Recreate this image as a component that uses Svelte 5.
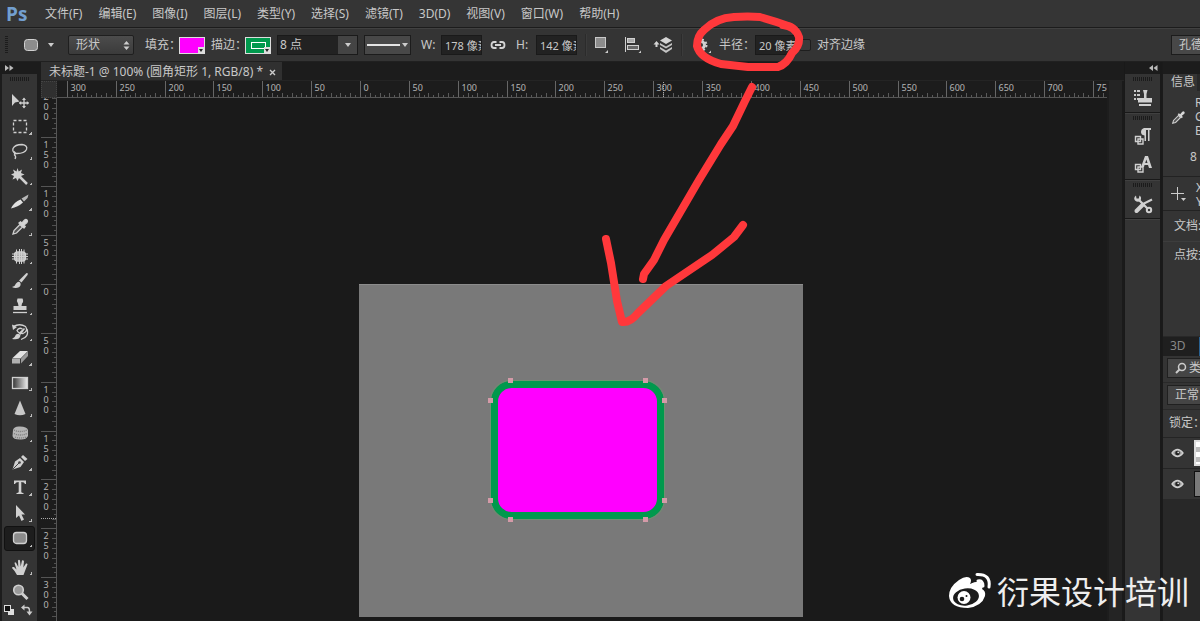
<script>
  const menus = ['文件(F)', '编辑(E)', '图像(I)', '图层(L)', '类型(Y)', '选择(S)', '滤镜(T)', '3D(D)', '视图(V)', '窗口(W)', '帮助(H)'];

  const toolGroups = [
    ['move', 'marquee', 'lasso', 'wand', 'slice', 'eyedropper'],
    ['heal', 'brush', 'stamp', 'history', 'eraser', 'gradient', 'sharpen', 'sponge'],
    ['pen', 'type', 'select', 'shape'],
    ['hand', 'zoom']
  ];

  const toolNames = {
    move: '移动工具', marquee: '矩形选框工具', lasso: '套索工具', wand: '魔棒工具', slice: '切片工具',
    eyedropper: '吸管工具', heal: '修补工具', brush: '画笔工具', stamp: '仿制图章工具', history: '历史记录画笔',
    eraser: '橡皮擦工具', gradient: '渐变工具', sharpen: '锐化工具', sponge: '海绵工具', pen: '钢笔工具',
    type: '文字工具', select: '路径选择工具', shape: '圆角矩形工具', hand: '抓手工具', zoom: '缩放工具'
  };

  let active = $state('shape');
  let strokeWidth = $state('8 点');
  let shapeWidth = $state('178 像素');
  let shapeHeight = $state('142 像素');
  let radius = $state('20 像素');
  let snap = $state(false);

  // 50 document units take 48.87 screen pixels at this zoom level.
  const step = 48.87;
  const originX = 303;
  const originY = 186;

  function ruler(origin, from, to) {
    const ticks = [];
    for (let i = from * 10; i <= to * 10; i++) {
      const pos = Math.round(origin + (i * step) / 10) + 0.5;
      const major = i % 10 === 0;
      ticks.push({ pos, size: major ? 17 : i % 2 === 0 ? 5 : 3, label: major ? String(Math.abs(i * 5)) : '' });
    }
    return ticks;
  }

  const horizontal = ruler(originX, -6, 16);
  const vertical = ruler(originY, -4, 7);
</script>

{#snippet eye()}
  <svg width="13" height="10" viewBox="0 0 13 10"><path d="M1 5Q6.500 -2 12 5Q6.500 12 1 5Z" fill="#999" stroke="#d0d0d0" stroke-width="1.300" /><circle cx="6.500" cy="5" r="2.300" fill="#222" /><circle cx="7.200" cy="4.300" r=".9" fill="#ddd" /></svg>
{/snippet}

{#snippet dropper(size)}
  <svg width={size} height={size} viewBox="0 0 18 18"><path d="M2 16L3 12.500L9 6.500L11.500 9L5.500 15Z" fill="#555" stroke="#d0d0d0" stroke-width="1.300" /><path d="M8 5L9.500 3.800L11 5L13.500 2Q15 1 16 2Q17 3 16 4.500L13 7L14.200 8.500L13 10Z" fill="#d6d6d6" /></svg>
{/snippet}

{#snippet toolIcon(name)}
  <svg width="18" height="18" viewBox="0 0 18 18" fill="none" stroke="#d0d0d0" stroke-width="1.300">
    {#if name === 'move'}
      <path d="M1 2V14L4 10.500L8.500 9.500Z" fill="#d0d0d0" stroke="none" />
      <path d="M13 6.500V15.500M8.500 11H17.500" />
      <path d="M13 5.500L15 8H11ZM13 16.500L15 14H11ZM7.800 11L10.200 9V13ZM18 11L15.800 9V13Z" fill="#d0d0d0" stroke="none" />
    {:else if name === 'marquee'}
      <rect x="2.500" y="3.500" width="13" height="12" stroke-dasharray="3 2" />
    {:else if name === 'lasso'}
      <path d="M5 12Q1 10 2 6.500Q4 2.500 11 2.500Q17 3.500 15.500 7.500Q13.500 11.500 6 11.500Q3 11 3.500 13Q5.500 14.500 4 17" />
      <path d="M5 12L3 9.500" />
    {:else if name === 'wand'}
      <path d="M7 7L16 16" stroke-width="2.500" />
      <path d="M6.500 0L7.700 3.500L11 1.500L10 5L13.500 6.500L10 8L11.500 11.500L8 10L6.500 13L5 10L1.500 11.500L3 8L0 6.500L3.300 5L2 1.500L5.500 3.500Z" fill="#d0d0d0" stroke="none" />
    {:else if name === 'slice'}
      <path d="M0 15.500Q3 9 9.500 6.500L12 9.500Q7 14 0 15.500Z" fill="#e0e0e0" stroke="none" />
      <path d="M10.500 5.500L17.500 1.500L16.500 5L13 8.500Z" fill="#b8b8b8" stroke="none" />
    {:else if name === 'eyedropper'}
      {@render dropper(18)}
    {:else if name === 'heal'}
      <rect x="3.500" y="5" width="11" height="9" rx="3" fill="#aaa" />
      <path d="M5.500 2.500V16.500M8.500 2V17M10.500 2V17M13 2.500V16.500M1 7H17M1 9.500H17M1 12H17" stroke-width="1" />
    {:else if name === 'brush'}
      <path d="M8 8.500L15.500 1L17 1.500L16.500 3L10.500 10.500Z" fill="#d0d0d0" stroke="none" />
      <path d="M1 15Q4 14.500 5 11.500Q7.500 8.500 9.500 11Q10.500 15.500 5 16Q3 16.200 1 15Z" fill="#d0d0d0" stroke="none" />
    {:else if name === 'stamp'}
      <path d="M6.500 1.500H11.500Q13 4.500 11 6.500L10.500 9H15.500V13H2.500V9H7.500L7 6.500Q5 4 6.500 1.500Z" fill="#d0d0d0" stroke="none" />
      <path d="M2 15.500H16" />
    {:else if name === 'history'}
      <path d="M2 3.500Q9 0 14.500 3.500Q17.500 8 12 10.500Q7.500 10.500 6 7.500Q8 4 11.500 6M16 6Q18.500 14 10 16.500" />
      <path d="M7.500 10L13 5L14 6L9.500 12Z" fill="#d0d0d0" stroke="none" />
      <path d="M1 16Q4 14.500 5 11.500Q8 9.500 9.500 12.500Q8.500 17.500 1 16Z" fill="#d0d0d0" stroke="none" />
      <path d="M1 1.500L2 7L6 4Z" fill="#d0d0d0" stroke="none" />
    {:else if name === 'eraser'}
      <path d="M1 10.500L9 3H17L9.500 10.500Z" fill="#e2e2e2" stroke="none" />
      <path d="M1 11H9V15.500H1Z" fill="#b0b0b0" stroke="none" />
      <path d="M10 10.500L17 3.500V8L10 15.500Z" fill="#999" stroke="none" />
    {:else if name === 'gradient'}
      <defs><linearGradient id="ramp"><stop offset="0" stop-color="#333" /><stop offset="1" stop-color="#eee" /></linearGradient></defs>
      <rect x="1.500" y="3.500" width="15" height="11" fill="url(#ramp)" />
    {:else if name === 'sharpen'}
      <path d="M9 1.500L14.500 15Q9 17.500 3.500 15Z" fill="#c8c8c8" stroke="none" />
    {:else if name === 'sponge'}
      <path d="M2 6Q3 2 9 2.500Q16 2.500 17 6V12Q15 16 9 15.500Q2 15.500 1.500 12Z" fill="#b5b5b5" stroke="none" />
      <path d="M3 6Q9 9 16 6M3 9.500Q9 12.500 16 9.500M4 13Q9 15 15 13" stroke="#777" stroke-dasharray="1 1" />
    {:else if name === 'pen'}
      <path d="M1.500 16.500L4 8.500L9 5L13 9L9.500 14Z" fill="#d0d0d0" stroke="none" />
      <path d="M10 4L12 2L16.500 6L14 8Z" fill="#d0d0d0" stroke="none" />
      <path d="M2 16L8 10" stroke="#444" stroke-width="1" /><circle cx="8.500" cy="9.500" r="1.300" fill="#444" stroke="none" />
    {:else if name === 'type'}
      <path d="M3 2.500H15V6H14Q13.500 4 10.300 4V14Q10.500 15 12.500 15V16H5.500V15Q7.500 15 7.700 14V4Q4.500 4 4 6H3Z" fill="#d0d0d0" stroke="none" />
    {:else if name === 'select'}
      <path d="M5 1V14L8 11.500L10.500 17L13 15.500L10.500 10.500H14Z" fill="#d0d0d0" stroke="none" />
    {:else if name === 'shape'}
      <rect x="2.500" y="3.500" width="13" height="11" rx="3" fill="#8c8c8c" />
    {:else if name === 'hand'}
      <path d="M6 17Q4 13 1 10Q1 8.500 3 9L5.500 11.500L3.500 5Q4 3.500 5.200 5L7.300 9L7 2.500Q8 1 9 2.500L9.700 8.500L11 2.500Q12.500 1.500 13 3.500L12.300 9.500L15 5.500Q16.500 5 16.500 6.500L14 13L12.500 17Z" fill="#d0d0d0" stroke="none" />
    {:else if name === 'zoom'}
      <circle cx="7.500" cy="7" r="4.800" fill="#999" stroke-width="1.600" /><path d="M11 10.500L16.500 16" stroke-width="3" />
    {/if}
  </svg>
{/snippet}

<div class="app">
  <nav class="menubar" aria-label="主菜单">
    <span class="logo">Ps</span>
    <div class="menus">
      {#each menus as item}<button>{item}</button>{/each}
    </div>
  </nav>

  <div class="options">
    <i class="grip-v"></i>
    <button class="preset" aria-label="工具预设">
      <svg width="16" height="14" viewBox="0 0 16 14"><rect x="1.500" y="1.500" width="13" height="11" rx="3" fill="#8c8c8c" stroke="#d0d0d0" /></svg>
      <i class="caret"></i>
    </button>
    <div class="mode">
      <select aria-label="工具模式"><option>形状</option><option>路径</option><option>像素</option></select>
      <svg width="7" height="11" viewBox="0 0 7 11"><path d="M3.500 1L6.500 4.500H.5ZM3.500 10L6.500 6.500H.5Z" fill="#ccc" /></svg>
    </div>
    <div class="pair">
      <span>填充：</span>
      <button class="swatch fill" aria-label="填充颜色"><i class="corner"></i></button>
    </div>
    <div class="pair">
      <span>描边：</span>
      <button class="swatch line" aria-label="描边颜色"><i class="ring"></i><i class="corner"></i></button>
    </div>
    <div class="stroke">
      <input aria-label="描边宽度" bind:value={strokeWidth} />
      <button aria-label="描边宽度选项"><i class="caret"></i></button>
    </div>
    <button class="linetype" aria-label="描边类型"><i class="sample"></i><i class="caret"></i></button>
    <label class="size">W:<input bind:value={shapeWidth} /></label>
    <button class="plain link" aria-label="链接宽高">
      <svg width="16" height="10" viewBox="0 0 16 10" fill="none" stroke="#d4d4d4" stroke-width="1.800"><path d="M6.500 2H4Q1.500 2 1.500 5Q1.500 8 4 8H6.500M9.500 2H12Q14.500 2 14.500 5Q14.500 8 12 8H9.500M5 5H11" /></svg>
    </button>
    <label class="size">H:<input bind:value={shapeHeight} /></label>
    <i class="divider"></i>
    <div class="arrange">
      <button class="plain" aria-label="路径操作">
        <svg width="18" height="18" viewBox="0 0 18 18"><rect x="2.500" y="1.500" width="10" height="10" fill="#8c8c8c" stroke="#c8c8c8" /><path d="M15 14V17H12Z" fill="#ccc" /></svg>
      </button>
      <button class="plain" aria-label="路径对齐方式">
        <svg width="18" height="18" viewBox="0 0 18 18"><path d="M2.500 1V16" stroke="#d0d0d0" /><rect x="4.500" y="2.500" width="7" height="4" fill="#aaa" stroke="#d0d0d0" /><rect x="4.500" y="9.500" width="11" height="4" fill="#666" stroke="#d0d0d0" /><path d="M18 14.500V17H15.500Z" fill="#ccc" /></svg>
      </button>
      <button class="plain" aria-label="路径排列方式">
        <svg width="20" height="18" viewBox="0 0 20 18"><path d="M13 1L19 4.500L13 8L7 4.500Z" fill="#d4d4d4" /><path d="M7 7L13 10.500L19 7V9L13 12.500L7 9ZM7 11L13 14.500L19 11V13L13 17L7 13Z" fill="#c4c4c4" /><path d="M3.500 5L6.500 8.500H4.500V11H2.500V8.500H.5Z" fill="#d4d4d4" /></svg>
      </button>
    </div>
    <i class="divider"></i>
    <button class="plain gear" aria-label="几何选项">
      <svg width="18" height="18" viewBox="0 0 18 18"><circle cx="8" cy="9" r="3.500" fill="none" stroke="#d0d0d0" stroke-width="3" /><circle cx="8" cy="9" r="5.500" fill="none" stroke="#d0d0d0" stroke-width="2" stroke-dasharray="2.200 2.120" /><path d="M18 14.500V17H15.500Z" fill="#ccc" /></svg>
    </button>
    <label class="radius">半径：<input bind:value={radius} /></label>
    <label class="snap"><input type="checkbox" bind:checked={snap} />对齐边缘</label>
    <button class="workspace">孔德川</button>
  </div>

  <div class="main">
    <aside class="toolbox" aria-label="工具">
      <div class="strip"><svg width="9" height="6" viewBox="0 0 9 6"><path d="M0 0L4 3L0 6ZM4.500 0L8.500 3L4.500 6Z" fill="#bbb" /></svg></div>
      <div class="tools">
        <i class="grip-h"></i>
        {#each toolGroups as group}
          <div class="group">
            {#each group as name}
              <button class:active={active === name} aria-label={toolNames[name]} onclick={() => (active = name)}>
                {@render toolIcon(name)}
                {#if name !== 'move' && name !== 'zoom'}<i class="more"></i>{/if}
              </button>
            {/each}
          </div>
        {/each}
        <div class="colors">
          <button aria-label="默认颜色"><svg width="12" height="12" viewBox="0 0 12 12"><rect x="5" y="5" width="6" height="6" fill="#ddd" /><rect x="1.500" y="1.500" width="6" height="6" fill="#111" stroke="#ddd" /></svg></button>
          <button aria-label="切换颜色"><svg width="12" height="12" viewBox="0 0 12 12"><path d="M3 3.500H6.500Q8.500 3.500 8.500 7V8" fill="none" stroke="#ccc" stroke-width="1.400" /><path d="M0 3.500L3.500 .5V6.500ZM8.500 11.500L5.500 7.500H11.500Z" fill="#ccc" /></svg></button>
        </div>
      </div>
    </aside>

    <section class="document">
      <div class="tabs">
        <div class="tab">
          <span>未标题-1 @ 100% (圆角矩形 1, RGB/8) *</span>
          <button aria-label="关闭"><svg width="7" height="7" viewBox="0 0 7 7"><path d="M1 1L6 6M6 1L1 6" stroke="#ccc" stroke-width="1.400" /></svg></button>
        </div>
      </div>
      <div class="view">
        <div class="origin"></div>
        <svg class="hruler" aria-hidden="true">
          {#each horizontal as t}
            <path d="M{t.pos} 17V{17 - t.size}" stroke={t.label ? '#666' : '#5a5a5a'} />
            {#if t.label}<text x={t.pos + 3} y="10">{t.label}</text>{/if}
          {/each}
          <path d="M606.500 1V17" stroke="#aaa" stroke-dasharray="1 1" />
        </svg>
        <svg class="vruler" aria-hidden="true">
          {#each vertical as t}
            <path d="M16 {t.pos}H{16 - t.size}" stroke={t.label ? '#555' : '#505050'} />
            {#each t.label.split('') as digit, i}<text x="5" y={t.pos + 10 + i * 10} text-anchor="middle">{digit}</text>{/each}
          {/each}
          <path d="M0 420.500H16" stroke="#aaa" stroke-dasharray="1 1" />
        </svg>
        <div class="canvas">
          <svg class="artboard" width="444" height="333" viewBox="0 0 444 333" role="img" aria-label="圆角矩形">
            <rect width="444" height="333" fill="#797979" />
            <path d="M0 .5H444" stroke="#8c8c8c" />
            <rect x="135.500" y="100.500" width="166" height="131" rx="17" fill="#f0f" stroke="#00994d" stroke-width="7" />
            <rect x="131.500" y="96.500" width="174" height="139" rx="20" fill="none" stroke="#6f9070" />
            {#each [[151, 96], [286, 96], [131, 116], [305, 116], [131, 216], [305, 216], [151, 235], [286, 235]] as [x, y]}
              <rect x={x - 2} y={y - 2} width="5" height="5" fill="#d49aa8" />
            {/each}
          </svg>
        </div>
        <div class="scrollbar"></div>
      </div>
    </section>

    <aside class="dock">
      <div class="strip end"><svg width="9" height="6" viewBox="0 0 9 6"><path d="M4 0L0 3L4 6ZM8.500 0L4.500 3L8.500 6Z" fill="#bbb" /></svg></div>
      <div class="cell">
        <i class="grip-h"></i>
        <button aria-label="仿制源"><svg width="22" height="20" viewBox="0 0 22 20"><path d="M2 3H8M2 7H8M2 11H7" stroke="#c8c8c8" stroke-width="2" stroke-dasharray="2 1 5" /><path d="M11 2H15.500L14.500 6V10H20V14.500H6V10H12V6ZM7 16H19V18H7Z" fill="#d0d0d0" /></svg></button>
      </div>
      <div class="cell">
        <i class="grip-h"></i>
        <button aria-label="段落样式"><svg width="20" height="20" viewBox="0 0 20 20"><path d="M18 3V1H11Q8 2 8 5Q8 8 11.500 8.500V14H13V3H15V14H16.500V3Z" fill="#d0d0d0" /><path d="M2.500 9.500H7.500V14.500H2.500ZM5 12H10V17H5Z" fill="none" stroke="#d0d0d0" stroke-width="1.400" /></svg></button>
        <button aria-label="字符样式"><svg width="20" height="20" viewBox="0 0 20 20"><path d="M8 12L12 1H15L19 13H16L15 10H11.500L11 12ZM12.200 8H14.500L13.400 4.500Z" fill="#d0d0d0" /><path d="M2.500 9.500H7.500V14.500H2.500ZM5 12H10V17H5Z" fill="none" stroke="#d0d0d0" stroke-width="1.400" /></svg></button>
      </div>
      <div class="cell">
        <i class="grip-h"></i>
        <button aria-label="工具预设"><svg width="20" height="20" viewBox="0 0 20 20" fill="none" stroke="#d0d0d0"><path d="M6 6L15 15" stroke-width="2.200" /><path d="M3 1.500Q0 4 2 6.500Q5 9 7.500 6.500Q9 3 6.500 1.500L5.800 4.500L3.500 4.500Z" fill="#d0d0d0" stroke="none" /><circle cx="16" cy="16" r="2.200" stroke-width="2" /><path d="M19 5.500L11 9.500" stroke-width="2" /><path d="M10 10.500L3.500 17" stroke-width="4" stroke-linecap="round" /></svg></button>
      </div>
    </aside>

    <aside class="panels">
      <div class="strip"></div>
      <div class="heading">信息</div>
      <div class="info">
        <div class="rgb">
          {@render dropper(15)}
          <p>R:<br />G:<br />B:</p>
        </div>
        <p class="bits">8 位</p>
      </div>
      <div class="coords">
        <svg width="16" height="16" viewBox="0 0 16 16"><path d="M6.500 0V13M0 6.500H13" stroke="#ccc" /><path d="M10 11H15L12.500 14Z" fill="#ccc" /></svg>
        <p>X:<br />Y:</p>
      </div>
      <div class="doc-size">文档:416.2K</div>
      <div class="hint">点按并拖动</div>
      <div class="ptabs"><span>3D</span><b></b></div>
      <div class="filter">
        <button><svg width="12" height="12" viewBox="0 0 12 12" fill="none" stroke="#ccc"><circle cx="7" cy="5" r="3.500" stroke-width="1.500" /><path d="M4.500 7.500L1 11" stroke-width="2" /></svg>类型</button>
      </div>
      <div class="filter"><button>正常</button></div>
      <div class="lock">锁定：</div>
      <div class="layer">{@render eye()}<i class="thumb checker"></i></div>
      <div class="layer">{@render eye()}<i class="thumb"></i></div>
    </aside>
  </div>

  <svg class="annotation" width="260" height="330" viewBox="0 0 260 330" fill="none" stroke="#ff383b" stroke-width="8" stroke-linecap="round" stroke-linejoin="round" aria-hidden="true">
    <path d="M201 27Q185 21 170 17Q158 16 144 17Q126 18 114 30Q107 36 107 46Q110 58 131 64L158 67H188Q197 64 202 53Q210 46 209 37Q205 26 193 25" />
    <path d="M162 87L155 101L143 126L131 144L109 180L74 240L64 260L54 274L53 279" />
    <path d="M16 239L21 263L27 301L32 322Q40 323 48 313L76 286L122 255L144 237L153 225" />
  </svg>

  <div class="watermark">
    <svg width="44" height="37" viewBox="0 0 44 37">
      <path d="M1 24Q1 15 11 8Q18 3 22 6Q24 8 22 12Q30 8 34 11Q36 13 34 17Q38 19 37 24Q34 34 20 36Q2 36 1 24Z" fill="#fff" />
      <ellipse cx="18" cy="25" rx="13" ry="8.500" transform="rotate(-8 18 25)" fill="#1b1b1b" />
      <circle cx="16" cy="25.500" r="6.500" fill="#fff" /><circle cx="14" cy="27" r="2.300" fill="#1b1b1b" /><circle cx="18.500" cy="24" r="1" fill="#1b1b1b" />
      <path d="M30 9Q35 8 35 14M29 2.500Q43 2 41 15" fill="none" stroke="#fff" stroke-width="3" stroke-linecap="round" />
    </svg>
    <span>衍果设计培训</span>
  </div>
</div>

<style>
  :global(body) { margin: 0; background: #1a1a1a; }
  .app {
    position: relative; display: flex; flex-direction: column; height: 100vh; overflow: hidden;
    font: 12px/16px "Noto Sans", "Noto Sans CJK SC", sans-serif; color: #c8c8c8; background: #1a1a1a;
  }
  .app *, .app *::before { box-sizing: border-box; }
  button, input, select { font: inherit; color: inherit; margin: 0; padding: 0; border: 0; border-radius: 0; background: none; outline: none; }
  button { display: flex; align-items: center; white-space: nowrap; }
  p { margin: 0; }
  svg { flex: none; display: block; }

  .menubar { display: flex; align-items: center; flex: none; height: 28px; background: #353535; border-bottom: 1px solid #1c1c1c; padding-left: 6px; }
  .logo { width: 39px; font: bold 19px/24px "Open Sans", sans-serif; color: #729fcf; }
  .menus { display: flex; gap: 16px; }

  .options { display: flex; align-items: center; flex: none; height: 34px; padding-left: 5px; background: #343434; border-top: 1px solid #414141; border-bottom: 1px solid #202020; overflow: hidden; white-space: nowrap; }
  .options > * { flex: none; }
  .grip-v { width: 3px; height: 18px; background: repeating-linear-gradient(#1c1c1c 0 1px, #343434 1px 2px); }
  .caret { flex: none; border: 3px solid transparent; border-top: 4px solid #ccc; border-bottom: 0; }
  .preset { margin-left: 15px; gap: 9px; }
  .mode { position: relative; margin-left: 14px; }
  .mode select { display: block; appearance: none; width: 66px; height: 20px; padding-left: 7px; border: 1px solid #1f1f1f; border-radius: 2px; background: linear-gradient(#4c4c4c, #3b3b3b); }
  .mode svg { position: absolute; right: 4px; top: 5px; pointer-events: none; }
  .pair { display: flex; align-items: center; width: 60px; margin-left: 11px; }
  .pair span { width: 34px; }
  .pair + .pair { margin-left: 6px; }
  .swatch { position: relative; flex: none; width: 26px; height: 17px; border: 1px solid #ddd; }
  .fill { background: #f0f; }
  .line { background: #00994d; }
  .ring { position: absolute; left: 5px; top: 4px; width: 15px; height: 7px; border: 1px solid #fff; }
  .corner { position: absolute; right: 0; bottom: 0; width: 6px; height: 6px; background: #ddd; }
  .corner::before { content: ""; position: absolute; left: 1px; top: 2px; border: 2px solid transparent; border-top: 3px solid #222; border-bottom: 0; }
  .stroke { display: flex; margin-left: 6px; border: 1px solid #1a1a1a; height: 20px; }
  .stroke input { width: 60px; padding-left: 2px; background: #222; }
  .stroke button { width: 19px; justify-content: center; background: #444; }
  .linetype { gap: 2px; width: 47px; height: 20px; margin-left: 6px; padding: 0 2px; border: 1px solid #1c1c1c; background: #484848; }
  .sample { flex: 1; height: 2px; background: #e4e4e4; }
  .size, .radius { display: flex; align-items: center; justify-content: space-between; width: 61px; margin-left: 10px; }
  .size input, .radius input { width: 41px; height: 20px; padding-left: 3px; font-size: 11px; background: #222; border: 1px solid #1a1a1a; }
  .radius { width: 75px; margin-left: 8px; }
  .plain { justify-content: center; }
  .link { margin-left: 8px; }
  .divider { width: 2px; height: 22px; margin-left: 8px; background: #2b2b2b; border-right: 1px solid #3b3b3b; }
  .arrange { display: flex; gap: 12px; margin-left: 6px; }
  .gear { margin-left: 10px; }
  .snap { display: flex; align-items: center; gap: 6px; margin-left: 5px; }
  .snap input { appearance: none; width: 12px; height: 12px; background: #3b3b3b; border: 1px solid #1e1e1e; border-radius: 2px; }
  .options .workspace { width: 29px; height: 20px; margin-left: auto; padding-left: 7px; border: 1px solid #1c1c1c; border-right: 0; background: #484848; overflow: hidden; }

  .main { flex: 1; display: flex; min-height: 0; }
  .strip { display: flex; align-items: center; flex: none; height: 12px; padding-left: 5px; background: #1c1c1c; }
  .strip.end { justify-content: flex-end; padding-right: 2px; }
  .grip-h { flex: none; width: 20px; height: 4px; align-self: center; background: repeating-linear-gradient(90deg, #1b1b1b 0 1px, #343434 1px 2px); }

  .toolbox { flex: none; width: 41px; display: flex; flex-direction: column; background: #1c1c1c; }
  .tools { flex: 1; display: flex; flex-direction: column; width: 35px; margin-left: 2px; padding-top: 3px; background: #343434; min-height: 0; }
  .group { flex: none; display: grid; grid-auto-rows: 1fr; height: 152px; padding: 0 2px; margin-top: 3px; }
  .grip-h + .group { margin-top: 7px; }
  .group:nth-of-type(2) { height: 203px; }
  .group:nth-of-type(3) { height: 102px; }
  .group:nth-of-type(4) { height: 50px; }
  .group button { position: relative; justify-content: center; border: 1px solid transparent; border-radius: 3px; }
  .group button.active { background: #1d1d1d; border-color: #111; }
  .more { position: absolute; right: 2px; bottom: 3px; width: 3px; height: 3px; background: linear-gradient(135deg, transparent 50%, #bbb 50%); }
  .colors { display: flex; justify-content: space-between; padding: 0 4px 0 1px; }

  .document { flex: 1; display: flex; flex-direction: column; min-width: 0; }
  .tabs { display: flex; flex: none; height: 19px; background: #1c1c1c; border-bottom: 1px solid #242424; }
  .tab { display: flex; align-items: center; gap: 6px; padding: 2px 6px 0 8px; background: #303030; white-space: nowrap; }
  .view { flex: 1; display: grid; grid-template: 17px minmax(0, 1fr) / 16px minmax(0, 1fr) 17px; min-height: 0; }
  .origin { background: #303030; border: 1px dotted #444; }
  .hruler { grid-column: 2 / 3; width: 100%; height: 17px; background: #1c1c1c; border-bottom: 1px solid #555; }
  .vruler { grid-area: 2 / 1; width: 16px; height: 100%; background: #1c1c1c; border-right: 1px solid #555; overflow: hidden; }
  .hruler text, .vruler text { font-size: 9px; fill: #b4b4b4; }
  .canvas { grid-area: 2 / 2; position: relative; overflow: hidden; background: #1a1a1a; }
  .artboard { position: absolute; left: 302px; top: 186px; }
  .scrollbar { grid-area: 1 / 3 / 3 / 4; background: #242424; border-left: 2px solid #1d1d1d; border-right: 2px solid #1a1a1a; }

  .dock { flex: none; width: 38px; display: flex; flex-direction: column; background: #343434; border-right: 2px solid #191919; border-left: 1px solid #191919; }
  .cell { display: flex; flex-direction: column; align-items: center; flex: none; padding-top: 3px; border-bottom: 1px solid #191919; box-shadow: 0 1px #404040; }
  .cell button { width: 100%; height: 28px; justify-content: center; }
  .cell .grip-h { margin-bottom: 3px; }

  .panels { flex: none; width: 37px; display: flex; flex-direction: column; overflow: hidden; background: #282828; white-space: nowrap; margin-left: 1px; }
  .panels > * { flex: none; }
  .heading { height: 17px; width: 34px; padding-left: 8px; background: #343434; }
  .info { height: 85px; background: #343434; }
  .rgb { display: flex; gap: 9px; padding: 5px 0 0 8px; align-items: center; line-height: 14px; }
  .bits { padding: 11px 0 0 27px; }
  .coords { display: flex; gap: 9px; height: 34px; padding: 2px 0 0 8px; align-items: center; border-top: 1px solid #222; line-height: 14px; background: #343434; }
  .doc-size { height: 31px; line-height: 30px; padding-left: 11px; border-top: 1px solid #222; background: #343434; }
  .hint { height: 95px; padding: 5px 0 0 11px; border-top: 1px solid #3d3d3d; background: #343434; }
  .ptabs { display: flex; height: 19px; line-height: 18px; margin-top: 1px; padding-left: 7px; gap: 13px; background: #1f1f1f; color: #888; }
  .ptabs b { flex: 1; border-left: 1px solid #286090; background: #343434; }
  .filter { height: 27px; padding: 2px 0 0 4px; background: #343434; border-bottom: 1px solid #292929; }
  .filter button { width: 60px; height: 20px; gap: 2px; padding-left: 7px; border: 1px solid #202020; background: #454545; }
  .lock { height: 27px; line-height: 26px; padding-left: 6px; background: #343434; }
  .layer { display: flex; align-items: center; gap: 10px; height: 31px; padding-left: 8px; border-top: 1px solid #242424; background: #343434; }
  .thumb { flex: none; width: 28px; height: 26px; border: 1px solid #111; background: #797979; }
  .checker { border: 2px solid #ddd; background: repeating-linear-gradient(#fff 0 5px, #bbb 5px 10px); }

  .annotation { position: absolute; left: 590px; top: 0; pointer-events: none; }
  .watermark { position: absolute; right: 11px; bottom: 11px; display: flex; align-items: center; gap: 5px; color: #eee; font: 400 32px/40px "Noto Sans CJK SC", sans-serif; pointer-events: none; }
</style>
